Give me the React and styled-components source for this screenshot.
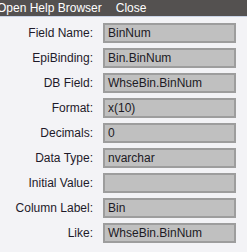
import React from "react";
import styled, { createGlobalStyle } from "styled-components";

const GlobalStyle = createGlobalStyle`
    html, body {
        margin: 0;
        padding: 0;
        background: #f3f3f6;
        font-family: "Liberation Sans", Arial, sans-serif;
        overflow: hidden;
    }
`;

const Page = styled.div`
    width: 247px;
    height: 252px;
    overflow: hidden;
`;

const MenuBar = styled.div`
    height: 16px;
    background: #545150;
    border-bottom: 1px solid #c9d3e6;
    display: flex;
    align-items: center;
    gap: 14px;
    margin-left: -3px;
`;

const MenuItem = styled.span`
    color: #fff;
    font-size: 12px;
    line-height: 16px;
    white-space: nowrap;
`;

const Form = styled.div`
    display: grid;
    grid-template-columns: 93px 133px;
    column-gap: 10px;
    row-gap: 5px;
    padding-top: 6px;
`;

const Label = styled.label`
    font-size: 12px;
    color: #1e1a2a;
    text-align: right;
    align-self: center;
    white-space: nowrap;
`;

const Field = styled.div`
    box-sizing: border-box;
    height: 20px;
    background: #c0c0c0;
    border: 2px solid #9d9d9d;
    font-size: 12px;
    color: #1c1a24;
    padding-left: 3px;
    line-height: 16px;
`;

const Footer = styled.div`
    display: flex;
    align-items: flex-start;
    margin-top: 9px;
`;

const Swatch = styled.div`
    width: 9px;
    height: 8px;
    background: #bdbdbd;
    border-top: 1px solid #a4a4a4;
`;

const Check = styled.div`
    width: 11px;
    height: 11px;
    background: #fff;
    border: 1px solid #a9a9a9;
    margin-left: 79px;
`;

const fields = [
    ["Field Name:", "BinNum"],
    ["EpiBinding:", "Bin.BinNum"],
    ["DB Field:", "WhseBin.BinNum"],
    ["Format:", "x(10)"],
    ["Decimals:", "0"],
    ["Data Type:", "nvarchar"],
    ["Initial Value:", ""],
    ["Column Label:", "Bin"],
    ["Like:", "WhseBin.BinNum"],
];

export default function App() {
    return (
        <Page>
            <GlobalStyle />
            <MenuBar>
                <MenuItem>Open Help Browser</MenuItem>
                <MenuItem>Close</MenuItem>
            </MenuBar>
            <Form>
                {fields.map(([label, value]) => (
                    <React.Fragment key={label}>
                        <Label>{label}</Label>
                        <Field>{value}</Field>
                    </React.Fragment>
                ))}
            </Form>
            <Footer>
                <Swatch />
                <Check />
            </Footer>
        </Page>
    );
}
